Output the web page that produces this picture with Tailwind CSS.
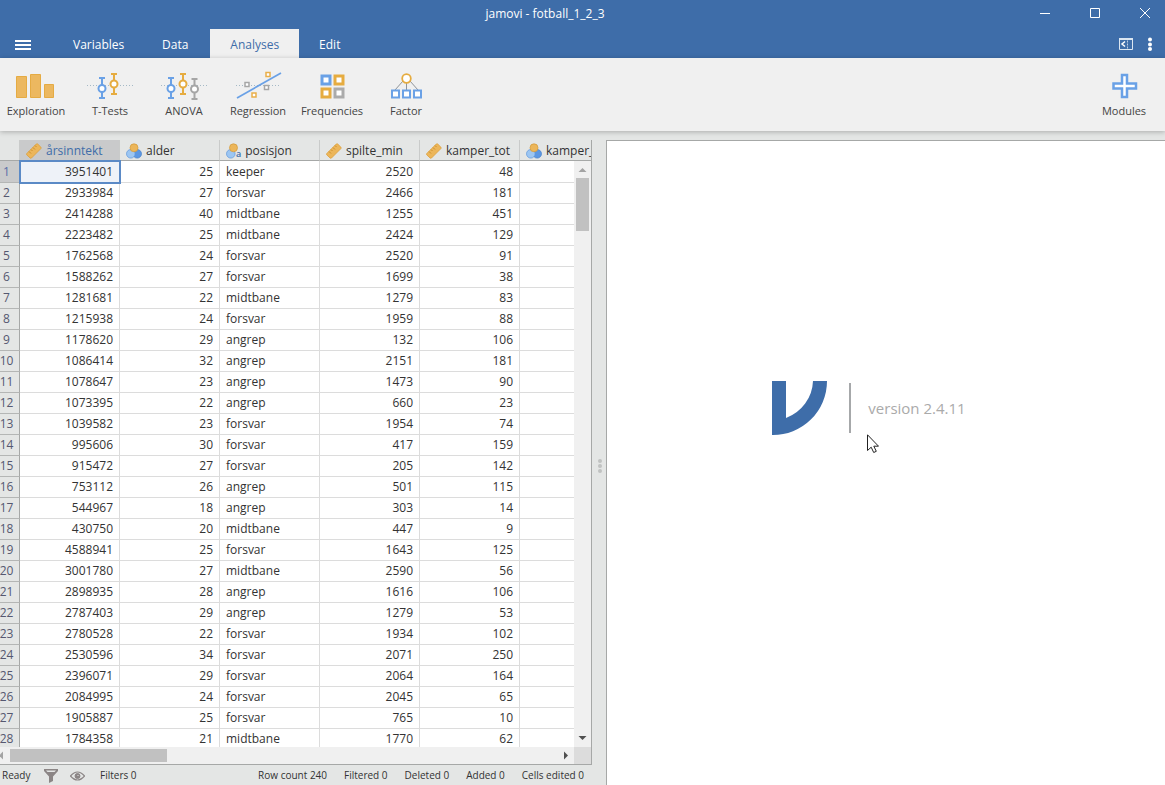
<!DOCTYPE html>
<html lang="en">
<head>
<meta charset="utf-8">
<meta name="viewport" content="width=device-width, initial-scale=1">
<title>jamovi - fotball_1_2_3</title>
<script src="https://cdn.jsdelivr.net/npm/@tailwindcss/browser@4"></script>
</head>
<body class="flex h-screen flex-col overflow-hidden bg-[#e4e6e5] font-['Open_Sans','Noto_Sans',sans-serif] text-xs text-[#333]">

<header class="shrink-0 bg-[#3e6da9] text-white">
  <div class="flex h-[29px] items-center pb-1">
    <h1 class="flex-1 pt-0.5 pl-[51px] text-center">jamovi - fotball_1_2_3</h1>
    <div class="flex justify-end gap-[38px] pr-[14px]">
      <button aria-label="Minimize"><svg class="size-3" viewBox="0 0 12 12" stroke="#fff"><path d="M1 6.500h10"/></svg></button>
      <button aria-label="Maximize"><svg class="size-3" viewBox="0 0 12 12" stroke="#fff" fill="none"><path d="M1.500 1.500h9v9h-9z"/></svg></button>
      <button aria-label="Close"><svg class="size-3" viewBox="0 0 12 12" stroke="#fff"><path d="M1 1l10 10M11 1L1 11"/></svg></button>
    </div>
  </div>
  <nav class="flex h-[29px] items-stretch">
    <button aria-label="Menu" class="flex w-[57px] items-center pt-0.5 pl-[15px]"><svg class="h-3 w-4" viewBox="0 0 16 12" fill="#fff"><path d="M0 1h16v2H0zM0 5h16v2H0zM0 9h16v2H0z"/></svg></button>
    <button class="px-4 pt-0.5">Variables</button>
    <button class="w-[70px] pt-0.5">Data</button>
    <button class="w-[89px] bg-[#f0f0f0] pt-0.5 text-[#3e6da9]">Analyses</button>
    <button class="w-[61px] pt-0.5">Edit</button>
    <div class="ml-auto flex items-center gap-[14px] pr-[13px]">
      <button aria-label="Toggle results"><svg class="h-[14px] w-4" viewBox="0 0 16 14" fill="none"><path d="M1.500 1.500h13v11h-13z" stroke="#dbe6f1"/><path d="M1 2h14" stroke="#dbe6f1" stroke-width="2"/><path d="M7 4.500L4 7l3 2.500" stroke="#fff" stroke-width="1.500"/><path d="M9.500 3.500v9" stroke="#b8cbe2" stroke-dasharray="2 1"/></svg></button>
      <button aria-label="Options"><svg class="h-[14px] w-1" viewBox="0 0 4 14" fill="#fff"><circle cx="2" cy="2.500" r="2"/><circle cx="2" cy="7.500" r="2"/><circle cx="2" cy="12" r="2"/></svg></button>
    </div>
  </nav>
</header>

<section class="z-10 flex h-[73px] shrink-0 bg-[#f0f0f0] pt-[13px] text-[11px] leading-4 text-[#444] shadow-[0_1px_5px_rgba(0,0,0,0.25)]" aria-label="Analyses">
  <button class="-ml-px flex w-[74px] flex-col items-center gap-0.5">
    <svg class="h-[30px] w-12" viewBox="0 0 48 30" fill="#ecb860" stroke="#e5ab43"><path d="M4.500 5.500h10v21h-10zM18.500 3.500h10v23h-10zM32.500 13.500h9v13h-9z"/></svg>Exploration</button>
  <button class="flex w-[74px] flex-col items-center gap-0.5">
    <svg class="h-[30px] w-12" viewBox="0 0 48 30" fill="none"><path d="M1 14.500h46" stroke="#a5b9c6" stroke-dasharray="1 2"/><g stroke="#6aa1e6" stroke-width="2"><path d="M16 7v20M13 7h6M13 27h6"/><circle cx="16" cy="17.500" r="3.500" fill="#fff"/></g><g stroke="#e6ac40" stroke-width="2"><path d="M28 3v20M25 3h6M25 23h6"/><circle cx="28" cy="13" r="3.500" fill="#fff"/></g></svg>T-Tests</button>
  <button class="flex w-[74px] flex-col items-center gap-0.5">
    <svg class="h-[30px] w-12" viewBox="0 0 48 30" fill="none"><path d="M1 14.500h46" stroke="#a5b9c6" stroke-dasharray="1 2"/><g stroke="#6aa1e6" stroke-width="2"><path d="M11 7v20M8 7h6M8 27h6"/><circle cx="11" cy="17.500" r="3.500" fill="#fff"/></g><g stroke="#e6ac40" stroke-width="2"><path d="M23 3v20M20 3h6M20 23h6"/><circle cx="23" cy="13" r="3.500" fill="#fff"/></g><g stroke="#a6a6a6" stroke-width="2"><path d="M34.500 8v20M31.500 8h6M31.500 28h6"/><circle cx="34.500" cy="18" r="3.500" fill="#fff"/></g></svg>ANOVA</button>
  <button class="flex w-[74px] flex-col items-center gap-0.5">
    <svg class="h-[30px] w-12" viewBox="0 0 48 30" fill="none"><path d="M2 14.500h45" stroke="#a5b9c6" stroke-dasharray="1 2"/><path d="M3 27L47 2" stroke="#6aa1e6" stroke-width="1.700"/><g fill="#fff" stroke-width="1.500"><path d="M11 11.500h4v4h-4zM30.500 14.500h4v4h-4z" stroke="#a6a6a6"/><path d="M18 22h4v4h-4zM32 1.500h4v4h-4z" stroke="#e9af49"/></g></svg>Regression</button>
  <button class="flex w-[74px] flex-col items-center gap-0.5">
    <svg class="h-[30px] w-12" viewBox="0 0 48 30" fill="#fff" stroke-width="3"><path d="M14 5h8v8h-8z" stroke="#6aa1e6"/><path d="M27 5h8v8h-8zM14 18h8v8h-8z" stroke="#e6ac40"/><path d="M27 18h8v8h-8z" stroke="#ababab"/></svg>Frequencies</button>
  <button class="flex w-[74px] flex-col items-center gap-0.5">
    <svg class="h-[30px] w-12" viewBox="0 0 48 30" fill="#fff"><path d="M24.500 12v7M21 10l-8 9M28 10l8 9" stroke="#8f9499"/><circle cx="24.500" cy="7.500" r="4.300" stroke="#e6ac40" stroke-width="1.800"/><path d="M10 19.500h7v7h-7zM21 19.500h7v7h-7zM32 19.500h7v7h-7z" stroke="#6aa1e6" stroke-width="2"/></svg>Factor</button>
  <button class="mr-1 ml-auto flex w-[74px] flex-col items-center gap-0.5">
    <svg class="h-[30px] w-12" viewBox="0 0 48 30" fill="#fff" stroke="#6aa1e6" stroke-width="2.500"><path d="M22 4h5v8.500h9v5h-9V26h-5v-8.500h-8.500v-5H22z"/></svg>Modules</button>
</section>

<main class="flex min-h-0 flex-1 pt-[9px]">
  <section class="flex w-[592px] shrink-0 flex-col">
    <div class="relative min-h-0 flex-1 overflow-hidden border-r border-b border-[#a6a8a7]">
      <table class="w-[620px] table-fixed border-separate border-spacing-0">
        <colgroup><col class="w-5"><col class="w-[100px]"><col class="w-[100px]"><col class="w-[100px]"><col class="w-[100px]"><col class="w-[100px]"><col class="w-[100px]"></colgroup>
        <thead><tr id="head" class="h-[21px] bg-[#e4e6e5]"><td class="border-r border-b border-b-[#a6a8a7] border-r-[#c9cbca] p-0"></td></tr></thead>
        <tbody id="rows" class="bg-white"></tbody>
      </table>
      <div class="absolute top-[21px] right-0 bottom-[17px] flex w-[17px] flex-col items-center bg-[#f0f0f0]">
        <svg class="h-[17px] w-[17px] shrink-0" viewBox="0 0 17 17" fill="#a3a3a3"><path d="M4.500 11h8l-4-4z"/></svg>
        <div class="h-[53px] w-[13px] bg-[#c1c1c1]"></div>
        <svg class="mt-auto h-[17px] w-[17px] shrink-0" viewBox="0 0 17 17" fill="#505050"><path d="M4.500 6h8l-4 4z"/></svg>
      </div>
      <div class="absolute inset-x-0 bottom-0 flex h-[17px] items-center bg-[#f0f0f0]">
        <svg class="h-[17px] w-[10px]" viewBox="0 0 10 17" fill="#a3a3a3"><path d="M3 4.500v8l-4-4z"/></svg>
        <div class="h-[13px] w-[157px] bg-[#c1c1c1]"></div>
        <svg class="ml-auto h-[17px] w-[17px]" viewBox="0 0 17 17" fill="#505050"><path d="M7 4.500v8l4-4z"/></svg>
        <div class="h-[17px] w-[17px] bg-[#dcdcdc]"></div>
      </div>
    </div>
    <footer class="flex h-5 shrink-0 items-center pt-0.5 pr-2 pl-0.5 text-[10px] text-[#333]">
      <span class="w-[42px]">Ready</span>
      <button aria-label="Filters" class="mr-3"><svg class="size-[14px]" viewBox="0 0 14 14" fill="#8b8585"><path d="M0 0h14v2L9 7.500V12l-4 2V7.500L0 2zM2 1.500l1.500 1.500h7L12 1.500z" fill-rule="evenodd"/></svg></button>
      <button aria-label="Show filtered rows" class="mr-[15px]"><svg class="h-[10px] w-[15px]" viewBox="0 0 15 10" fill="none" stroke="#8b8585"><path d="M.5 5Q7.500-3 14.500 5Q7.500 13 .5 5z" stroke-width="1.200"/><circle cx="7.500" cy="5" r="2.500" fill="#8b8585"/><circle cx="8" cy="4.500" r=".5" fill="#fff" stroke="none"/></svg></button>
      <span>Filters 0</span>
      <div class="ml-auto flex gap-[17px] whitespace-nowrap"><span>Row count 240</span><span>Filtered 0</span><span>Deleted 0</span><span>Added 0</span><span>Cells edited 0</span></div>
    </footer>
  </section>

  <div class="flex w-[14px] shrink-0 flex-col items-center justify-center gap-px pt-1.5 pl-0.5" role="separator" aria-orientation="vertical">
    <i class="size-1 rounded-full bg-[#c0c2c1]"></i><i class="size-1 rounded-full bg-[#c0c2c1]"></i><i class="size-1 rounded-full bg-[#c0c2c1]"></i>
  </div>

  <section class="flex min-w-0 flex-1 justify-center border-t border-l border-[#a6a8a7] bg-white pt-[239px] pr-[34px]" aria-label="Results">
    <div class="relative flex h-14 items-center">
      <svg class="h-14 w-14" viewBox="0 0 56 56" fill="#3e6da9" role="img" aria-label="jamovi"><path d="M0 1h14v37A41 41 0 0 0 41 1h14A54 54 0 0 1 0 55z"/></svg>
      <div class="ml-[21px] h-[50px] w-0.5 bg-[#a6a8aa]"></div>
      <span class="ml-[17px] text-[15px] text-[#aaa]">version 2.4.11</span>
      <svg class="absolute top-[54px] left-[95px] h-5 w-3" viewBox="0 0 12 20" fill="#fff" stroke="#222"><path d="M.5.8v15.700l3.700-3.300 2.500 5.300 2.600-1.200-2.500-5.100h4.700z"/></svg>
    </div>
  </section>
</main>

<script>
const ruler = '<svg class="h-4 w-4 shrink-0" viewBox="0 0 16 16"><path d="M.8 10.500L10.300 1q.7-.6 1.400 0l3.200 3.200q.6.700 0 1.400L5.500 15q-.7.600-1.400 0L.8 11.900q-.6-.7 0-1.400z" fill="#ecb65a" stroke="#dda03a" stroke-width=".8"/><path d="M3 8.500l2 2M5 6.500l1.500 1.500M7 4.500l2 2M9 2.500l1.500 1.500" stroke="#c98a28" stroke-width=".9"/></svg>';
const circles = '<svg class="h-4 w-4 shrink-0" viewBox="0 0 16 16"><circle cx="11.200" cy="10.800" r="4.300" fill="#5c97e2" stroke="#4380cc" stroke-width=".7"/><circle cx="4.800" cy="10.800" r="4.300" fill="#9cc6f2" stroke="#5d96dc" stroke-width=".7"/><circle cx="8" cy="4.800" r="4" fill="#ecb65a" stroke="#d29a3a" stroke-width=".7"/></svg>';
const textual = '<span class="flex shrink-0 items-end text-[9px] leading-[10px] font-semibold text-[#3e6da9]"><svg class="-mr-0.5 h-4 w-3" viewBox="0 0 12 16"><circle cx="4.800" cy="10.800" r="4.300" fill="#9cc6f2" stroke="#5d96dc" stroke-width=".7"/><circle cx="7.500" cy="4.800" r="4" fill="#ecb65a" stroke="#d29a3a" stroke-width=".7"/></svg>a</span>';
const columns = [['årsinntekt', ruler], ['alder', circles], ['posisjon', textual], ['spilte_min', ruler], ['kamper_tot', ruler], ['kamper_', circles]];
const data = `3951401 25 keeper 2520 48
2933984 27 forsvar 2466 181
2414288 40 midtbane 1255 451
2223482 25 midtbane 2424 129
1762568 24 forsvar 2520 91
1588262 27 forsvar 1699 38
1281681 22 midtbane 1279 83
1215938 24 forsvar 1959 88
1178620 29 angrep 132 106
1086414 32 angrep 2151 181
1078647 23 angrep 1473 90
1073395 22 angrep 660 23
1039582 23 forsvar 1954 74
995606 30 forsvar 417 159
915472 27 forsvar 205 142
753112 26 angrep 501 115
544967 18 angrep 303 14
430750 20 midtbane 447 9
4588941 25 forsvar 1643 125
3001780 27 midtbane 2590 56
2898935 28 angrep 1616 106
2787403 29 angrep 1279 53
2780528 22 forsvar 1934 102
2530596 34 forsvar 2071 250
2396071 29 forsvar 2064 164
2084995 24 forsvar 2045 65
1905887 25 forsvar 765 10
1784358 21 midtbane 1770 62`.split('\n').map(l => l.split(' '));

document.getElementById('head').insertAdjacentHTML('beforeend', columns.map(([name, icon], i) =>
  `<th scope="col" class="border-r border-b border-b-[#a6a8a7] border-r-[#c9cbca] p-0 font-normal ${i === 0 ? 'bg-[#c9cacb] text-[#3e6da9]' : ''}"><div class="flex h-5 items-center gap-1 pt-px pl-1.5 leading-[18px]">${icon}<span>${name}</span></div></th>`).join(''));

document.getElementById('rows').innerHTML = data.map((row, r) => {
  const head = `<th scope="row" class="border-r border-b border-r-[#a6a8a7] border-b-[#b4b6b5] p-0 pr-1.5 font-normal ${r === 0 ? 'bg-[#c9cacb] text-[#5a6ea8]' : 'bg-[#e4e6e5] text-[#555870]'}"><div class="flex justify-center">${r + 1}</div></th>`;
  const cells = row.concat('').map((v, c) => {
    const active = r === 0 && c === 0;
    return `<td class="border-r border-b border-[#dcdcdc] px-1.5 py-0 ${c === 2 ? 'text-left' : 'text-right'} ${active ? 'bg-[#eef2f8] outline-2 -outline-offset-1 outline-[#5b8ac6]' : ''}">${v}</td>`;
  }).join('');
  return `<tr class="${r === 0 ? 'h-[22px]' : 'h-[21px]'} leading-[18px]">${head}${cells}</tr>`;
}).join('');
</script>
</body>
</html>
